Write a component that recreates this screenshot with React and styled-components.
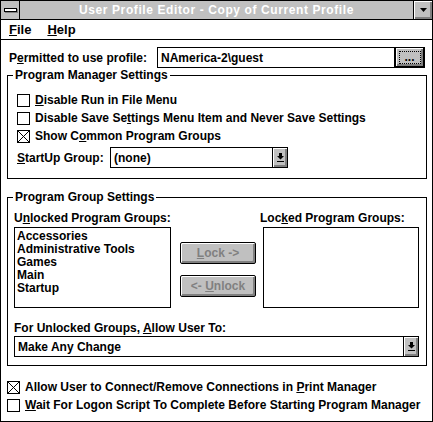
import React from 'react';
import styled, { createGlobalStyle, css } from 'styled-components';

// Global
const GlobalStyle = createGlobalStyle`
  * { box-sizing: border-box; }
  body {
    margin: 0;
    background: #fff;
    color: #000;
    font-family: "Liberation Sans", Arial, sans-serif;
    font-size: 12px;
    font-weight: 700;
  }
`;

const bevel = css`
  background: #c0c0c0;
  box-shadow: inset 1px 1px 0 #fff, inset -1px -1px 0 #808080, inset -2px -2px 0 #808080;
`;

// Window frame
const Window = styled.div`
  width: 433px;
  height: 422px;
  border: 1px solid #000;
  display: flex;
  flex-direction: column;
  overflow: hidden;
`;

const TitleBar = styled.div`
  height: 19px;
  flex: none;
  display: flex;
  background: #c0c0c0;
  border-bottom: 1px solid #000;
`;

const SysMenu = styled.div`
  width: 19px;
  border-right: 1px solid #000;
  display: flex;
  align-items: center;
  justify-content: center;
`;

const SysBar = styled.div`
  width: 13px;
  height: 4px;
  background: #fff;
  border: 1px solid #000;
  box-shadow: 1px 1px 0 #808080;
`;

const Title = styled.div`
  flex: 1;
  display: flex;
  align-items: center;
  justify-content: center;
  color: #fff;
  font-size: 12px;
  letter-spacing: 0.6px;
`;

const MinButton = styled.div`
  width: 19px;
  border-left: 1px solid #000;
  display: flex;
  align-items: center;
  justify-content: center;
  ${bevel};
`;

const MenuBar = styled.div`
  height: 20px;
  flex: none;
  display: flex;
  align-items: center;
  gap: 16px;
  padding-left: 8px;
  border-bottom: 1px solid #000;
  font-size: 13px;
`;

// Body
const Body = styled.div`
  display: flex;
  flex-direction: column;
  padding: 7px 5px 0 6px;
`;

const ProfileRow = styled.div`
  display: flex;
  align-items: center;
  height: 21px;
`;

const ProfileLabel = styled.div`
  width: 150px;
  padding-left: 2px;
`;

const TextBox = styled.div`
  width: 238px;
  height: 21px;
  border: 1px solid #000;
  display: flex;
  align-items: center;
  padding-left: 3px;
`;

const DotsButton = styled.div`
  width: 30px;
  height: 21px;
  border: 1px solid #000;
  border-right-width: 2px;
  border-bottom-width: 2px;
  display: flex;
  align-items: center;
  justify-content: center;
  ${bevel};
`;

const FocusRect = styled.div`
  width: 22px;
  height: 13px;
  border: 1px dotted #000;
  display: flex;
  align-items: flex-end;
  justify-content: center;
  line-height: 11px;
`;

const GroupBox = styled.div`
  position: relative;
  border: 1px solid #000;
  margin-top: ${p => p.top}px;
  padding: ${p => p.pad};
`;

const Legend = styled.span`
  position: absolute;
  top: -8px;
  left: 5px;
  padding: 0 2px;
  background: #fff;
  line-height: 14px;
`;

const CheckRow = styled.div`
  height: 18px;
  display: flex;
  align-items: center;
  gap: 5px;
`;

const Box = styled.div`
  width: 13px;
  height: 13px;
  border: 1px solid #000;
  background: #fff;
  display: flex;
`;

const ComboRow = styled.div`
  display: flex;
  align-items: center;
  margin-top: ${p => p.top || 0}px;
`;

const ComboLabel = styled.div`
  width: 93px;
`;

const Combo = styled.div`
  width: ${p => p.width}px;
  height: 21px;
  border: 1px solid #000;
  display: flex;
`;

const ComboText = styled.div`
  flex: 1;
  display: flex;
  align-items: center;
  padding-left: 3px;
`;

const ComboArrow = styled.div`
  width: 15px;
  border-left: 1px solid #000;
  display: flex;
  align-items: center;
  justify-content: center;
  ${bevel};
`;

const ListsRow = styled.div`
  display: flex;
`;

const ListColumn = styled.div`
  display: flex;
  flex-direction: column;
`;

const ListLabel = styled.div`
  height: 14px;
  line-height: 14px;
  margin: 0 0 2px ${p => p.shift || 0}px;
`;

const ListBox = styled.div`
  width: ${p => p.width}px;
  height: 81px;
  border: 1px solid #000;
  padding: 2px 2px;
  line-height: 13px;
`;

const ButtonColumn = styled.div`
  display: flex;
  flex-direction: column;
  gap: 11px;
  padding-top: 31px;
  margin: 0 7px 0 9px;
`;

const PushButton = styled.div`
  width: 76px;
  height: 22px;
  border: 1px solid #000;
  border-radius: 2px;
  display: flex;
  align-items: center;
  justify-content: center;
  color: ${p => (p.disabled ? '#808080' : '#000')};
  ${bevel};
`;

const AllowLabel = styled.div`
  height: 14px;
  line-height: 14px;
  margin: 13px 0 1px;
`;

const Footer = styled.div`
  margin-top: 12px;
  display: flex;
  flex-direction: column;
`;

const Check = ({ checked, children }) => (
  <CheckRow>
    <Box>
      {checked && (
        <svg width="11" height="11" viewBox="0 0 11 11">
          <path d="M0 0L11 11M11 0L0 11" stroke="#000" strokeWidth="1" />
        </svg>
      )}
    </Box>
    <span>{children}</span>
  </CheckRow>
);

const DropArrow = () => (
  <svg width="7" height="9" viewBox="0 0 7 9">
    <path d="M2 0h3v3h2L3.5 6.5 0 3h2z" fill="#000" />
    <rect x="0" y="8" width="7" height="1" fill="#000" />
  </svg>
);

// Main
const App = () => (
  <>
    <GlobalStyle />
    <Window>
      <TitleBar>
        <SysMenu><SysBar /></SysMenu>
        <Title>User Profile Editor - Copy of Current Profile</Title>
        <MinButton>
          <svg width="7" height="4" viewBox="0 0 7 4">
            <path d="M0 0h7L3.5 4z" fill="#000" />
          </svg>
        </MinButton>
      </TitleBar>

      <MenuBar>
        <span><u>F</u>ile</span>
        <span><u>H</u>elp</span>
      </MenuBar>

      <Body>
        <ProfileRow>
          <ProfileLabel>P<u>e</u>rmitted to use profile:</ProfileLabel>
          <TextBox>NAmerica-2\guest</TextBox>
          <DotsButton><FocusRect>...</FocusRect></DotsButton>
        </ProfileRow>

        {/* Program Manager Settings */}
        <GroupBox top={7} pad="15px 9px 10px 9px">
          <Legend>Program Manager Settings</Legend>
          <Check><u>D</u>isable Run in File Menu</Check>
          <Check>Disable Save Se<u>t</u>tings Menu Item and Never Save Settings</Check>
          <Check checked>Show C<u>o</u>mmon Program Groups</Check>
          <ComboRow top={2}>
            <ComboLabel><u>S</u>tartUp Group:</ComboLabel>
            <Combo width={178}>
              <ComboText>(none)</ComboText>
              <ComboArrow><DropArrow /></ComboArrow>
            </Combo>
          </ComboRow>
        </GroupBox>

        {/* Program Group Settings */}
        <GroupBox top={18} pad="13px 6px 8px 6px">
          <Legend>Program Group Settings</Legend>
          <ListsRow>
            <ListColumn>
              <ListLabel>U<u>n</u>locked Program Groups:</ListLabel>
              <ListBox width={157}>
                <div>Accessories</div>
                <div>Administrative Tools</div>
                <div>Games</div>
                <div>Main</div>
                <div>Startup</div>
              </ListBox>
            </ListColumn>
            <ButtonColumn>
              <PushButton disabled><span><u>L</u>ock -&gt;</span></PushButton>
              <PushButton disabled><span>&lt;- <u>U</u>nlock</span></PushButton>
            </ButtonColumn>
            <ListColumn>
              <ListLabel shift={-3}>Loc<u>k</u>ed Program Groups:</ListLabel>
              <ListBox width={156} />
            </ListColumn>
          </ListsRow>
          <AllowLabel>For Unlocked Groups, <u>A</u>llow User To:</AllowLabel>
          <Combo width={405}>
            <ComboText>Make Any Change</ComboText>
            <ComboArrow><DropArrow /></ComboArrow>
          </Combo>
        </GroupBox>

        <Footer>
          <Check checked>Allow User to Connect/Remove Connections in <u>P</u>rint Manager</Check>
          <Check><u>W</u>ait For Logon Script To Complete Before Starting Program Manager</Check>
        </Footer>
      </Body>
    </Window>
  </>
);

export default App;
